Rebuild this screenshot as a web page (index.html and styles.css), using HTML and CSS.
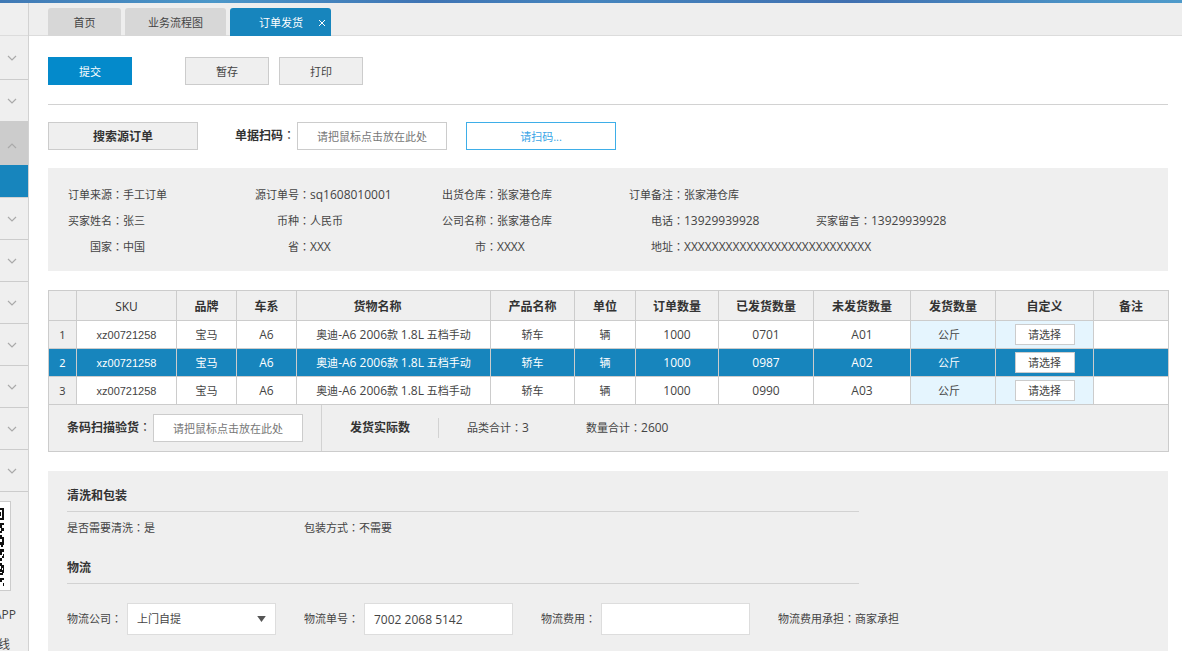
FILE: index.html
```html
<!DOCTYPE html>
<html lang="zh-CN">
<head>
<meta charset="utf-8">
<title>订单发货</title>
<link rel="stylesheet" href="styles.css">
</head>
<body>
<div class="brand-strip"></div>
<div class="shell">
  <aside class="sidebar">
    <div class="side-head"></div>
    <nav class="side-nav" aria-label="主菜单">
      <button class="side-item side-first" aria-label="展开"><svg class="chev" viewBox="0 0 10 6"><path d="M1 1l4 4 4-4"/></svg></button>
      <button class="side-item" aria-label="展开"><svg class="chev" viewBox="0 0 10 6"><path d="M1 1l4 4 4-4"/></svg></button>
      <button class="side-item side-open" aria-label="收起"><svg class="chev" viewBox="0 0 10 6"><path d="M1 5l4-4 4 4"/></svg></button>
      <a class="side-current" href="#" aria-label="当前页面"></a>
      <button class="side-item" aria-label="展开"><svg class="chev" viewBox="0 0 10 6"><path d="M1 1l4 4 4-4"/></svg></button>
      <button class="side-item" aria-label="展开"><svg class="chev" viewBox="0 0 10 6"><path d="M1 1l4 4 4-4"/></svg></button>
      <button class="side-item" aria-label="展开"><svg class="chev" viewBox="0 0 10 6"><path d="M1 1l4 4 4-4"/></svg></button>
      <button class="side-item" aria-label="展开"><svg class="chev" viewBox="0 0 10 6"><path d="M1 1l4 4 4-4"/></svg></button>
      <button class="side-item" aria-label="展开"><svg class="chev" viewBox="0 0 10 6"><path d="M1 1l4 4 4-4"/></svg></button>
      <button class="side-item" aria-label="展开"><svg class="chev" viewBox="0 0 10 6"><path d="M1 1l4 4 4-4"/></svg></button>
      <button class="side-item" aria-label="展开"><svg class="chev" viewBox="0 0 10 6"><path d="M1 1l4 4 4-4"/></svg></button>
    </nav>
    <div class="qr">
      <svg class="qr-code" viewBox="0 0 5 78" shape-rendering="crispEdges">
        <path d="M0 0h4v12H0v-2h2V2H0zM0 4h1v4H0zM0 15h4v2H2v3h2v3H2v2H0v-2h1v-3H0zM0 27h2v2h2v4H2v-2H0zM3 30h1v7H3v2H1v-2H0v-3h2zM0 41h4v3H2v3H0zM3 46h1v4H2v3H0v-3h2zM0 55h2v2h2v3H2v4H0v-3h1v-3H0zM3 60h1v5H3v2H0v-2h2zM0 70h4v2H2v2H0zM3 75h1v3H3z"/>
      </svg>
    </div>
    <div class="side-text side-app">APP</div>
    <div class="side-text side-line">线</div>
  </aside>

  <div class="workspace">
    <nav class="tabs" aria-label="页签">
      <a class="tab tab-home" href="#">首页</a>
      <a class="tab" href="#">业务流程图</a>
      <div class="tab tab-active">
        <a class="tab-link" href="#">订单发货</a>
        <button class="tab-close" aria-label="关闭"><svg viewBox="0 0 8 8"><path d="M1 1l6 6M7 1L1 7"/></svg></button>
      </div>
    </nav>

    <main class="main">
      <div class="actions">
        <button class="btn btn-primary">提交</button>
        <button class="btn">暂存</button>
        <button class="btn">打印</button>
      </div>

      <div class="scan-row">
        <button class="btn btn-wide strong">搜索源订单</button>
        <label class="scan-label strong" for="bill-scan">单据扫码<span class="colon">：</span></label>
        <input class="field" id="bill-scan" placeholder="请把鼠标点击放在此处">
        <button class="btn btn-wide btn-scan">请扫码...</button>
      </div>

      <dl class="info">
        <div class="pair"><dt>订单来源<span class="colon">：</span></dt><dd>手工订单</dd></div>
        <div class="pair"><dt>源订单号<span class="colon">：</span></dt><dd class="num">sq1608010001</dd></div>
        <div class="pair"><dt>出货仓库<span class="colon">：</span></dt><dd>张家港仓库</dd></div>
        <div class="pair pair-last"><dt>订单备注<span class="colon">：</span></dt><dd>张家港仓库</dd></div>
        <div class="pair"><dt>买家姓名<span class="colon">：</span></dt><dd>张三</dd></div>
        <div class="pair"><dt>币种<span class="colon">：</span></dt><dd>人民币</dd></div>
        <div class="pair"><dt>公司名称<span class="colon">：</span></dt><dd>张家港仓库</dd></div>
        <div class="pair"><dt>电话<span class="colon">：</span></dt><dd class="num">13929939928</dd></div>
        <div class="pair pair-end"><dt>买家留言<span class="colon">：</span></dt><dd class="num">13929939928</dd></div>
        <div class="pair"><dt>国家<span class="colon">：</span></dt><dd>中国</dd></div>
        <div class="pair"><dt>省<span class="colon">：</span></dt><dd class="num">XXX</dd></div>
        <div class="pair"><dt>市<span class="colon">：</span></dt><dd class="num">XXXX</dd></div>
        <div class="pair pair-last"><dt>地址<span class="colon">：</span></dt><dd class="num">XXXXXXXXXXXXXXXXXXXXXXXXXXX</dd></div>
      </dl>

      <section class="goods">
        <table class="grid">
          <colgroup>
            <col class="c-no"><col class="c-sku"><col class="c-brand"><col class="c-brand"><col class="c-name"><col class="c-prod"><col class="c-unit"><col class="c-order"><col class="c-sent"><col class="c-left"><col class="c-qty"><col class="c-custom"><col class="c-note">
          </colgroup>
          <thead>
            <tr><th></th><th class="latin">SKU</th><th>品牌</th><th>车系</th><th class="th-name">货物名称</th><th>产品名称</th><th>单位</th><th>订单数量</th><th>已发货数量</th><th>未发货数量</th><th>发货数量</th><th>自定义</th><th>备注</th></tr>
          </thead>
          <tbody>
            <tr><td class="no">1</td><td class="sku">xz00721258</td><td>宝马</td><td class="num">A6</td><td>奥迪<span class="num">-A6 2006</span>款 <span class="num">1.8L</span> 五档手动</td><td>轿车</td><td>辆</td><td class="num">1000</td><td class="num">0701</td><td class="num">A01</td><td class="edit qty">公斤</td><td class="edit"><select class="pick" aria-label="自定义 1"><option>请选择</option></select></td><td></td></tr>
            <tr class="selected"><td class="no">2</td><td class="sku">xz00721258</td><td>宝马</td><td class="num">A6</td><td>奥迪<span class="num">-A6 2006</span>款 <span class="num">1.8L</span> 五档手动</td><td>轿车</td><td>辆</td><td class="num">1000</td><td class="num">0987</td><td class="num">A02</td><td class="edit qty">公斤</td><td class="edit"><select class="pick" aria-label="自定义 2"><option>请选择</option></select></td><td></td></tr>
            <tr><td class="no">3</td><td class="sku">xz00721258</td><td>宝马</td><td class="num">A6</td><td>奥迪<span class="num">-A6 2006</span>款 <span class="num">1.8L</span> 五档手动</td><td>轿车</td><td>辆</td><td class="num">1000</td><td class="num">0990</td><td class="num">A03</td><td class="edit qty">公斤</td><td class="edit"><select class="pick" aria-label="自定义 3"><option>请选择</option></select></td><td></td></tr>
          </tbody>
        </table>
        <div class="summary">
          <div class="check">
            <label class="strong" for="check-scan">条码扫描验货<span class="colon">：</span></label>
            <input class="field" id="check-scan" placeholder="请把鼠标点击放在此处">
          </div>
          <div class="actual strong">发货实际数</div>
          <div class="total total-kind">品类合计<span class="colon">：</span><span class="num">3</span></div>
          <div class="total">数量合计<span class="colon">：</span><span class="num">2600</span></div>
        </div>
      </section>

      <section class="details">
        <h2 class="section-title strong">清洗和包装</h2>
        <div class="facts">
          <div>是否需要清洗<span class="colon">：</span>是</div>
          <div>包装方式<span class="colon">：</span>不需要</div>
        </div>
        <h2 class="section-title strong">物流</h2>
        <div class="logistics">
          <div class="form-item">
            <label for="carrier">物流公司<span class="colon">：</span></label>
            <div class="select-wrap">
              <select class="entry" id="carrier"><option>上门自提</option></select>
              <svg class="arrow" viewBox="0 0 10 7"><path d="M0 0h10L5 7z"/></svg>
            </div>
          </div>
          <div class="form-item">
            <label for="waybill">物流单号<span class="colon">：</span></label>
            <input class="entry num" id="waybill" value="7002 2068 5142">
          </div>
          <div class="form-item">
            <label for="fee">物流费用<span class="colon">：</span></label>
            <input class="entry num" id="fee">
          </div>
          <div>物流费用承担<span class="colon">：</span>商家承担</div>
        </div>
      </section>
    </main>
  </div>
</div>
</body>
</html>
```
FILE: styles.css
```css
* { box-sizing: border-box; }

body {
  margin: 0;
  height: 100vh;
  display: flex;
  flex-direction: column;
  overflow: hidden;
  background: #fff;
  color: #444;
  font: 11px/16px "Open Sans", "Noto Sans CJK SC", sans-serif;
}

button, input, select {
  margin: 0;
  font: inherit;
  color: inherit;
  border-radius: 0;
}
button { cursor: pointer; padding: 0; }
a { color: inherit; text-decoration: none; }

/* Full-width colon centred in its cell */
.colon { font-family: "Noto Sans CJK TC", sans-serif; font-weight: 400; font-feature-settings: "locl" 0; line-height: 1; }
.num { font-size: 12px; }
.strong { font-size: 12px; font-weight: 700; color: #333; }

.brand-strip {
  flex: none;
  height: 3px;
  background: linear-gradient(90deg, #4079b5, #4b97c9 18%, #3f74b4 36%, #4585be 50%, #4070b0 72%, #4a90c4 90%, #4e9aca);
}

.shell { flex: 1; display: flex; min-height: 0; }

/* Sidebar */
.sidebar {
  flex: none;
  width: 29px;
  overflow: hidden;
  background: #efefef;
  border-right: 1px solid #d2d2d2;
}
.side-head { height: 33px; border-bottom: 1px solid #dcdcdc; }
.side-nav { display: flex; flex-direction: column; }
.side-item {
  height: 42px;
  padding-left: 7px;
  display: flex;
  align-items: center;
  background: none;
  border: 0;
  border-bottom: 1px solid #ccc;
}
.side-first { height: 44px; }
.side-open { height: 43px; padding-top: 6px; background: #ccc; }
.side-current { height: 33px; background: #1785bd; border-bottom: 1px solid #d2d2d2; }
.chev { width: 10px; height: 6px; fill: none; stroke: #aaa; stroke-width: 1.2; }
.qr {
  width: 11px;
  height: 90px;
  margin-top: 9px;
  padding: 6px 0;
  background: #fff;
  border: 1px solid #ccc;
  border-left: 0;
}
.qr-code { display: block; width: 5px; height: 78px; fill: #111; }
.side-text { display: flex; justify-content: flex-end; font-size: 12px; }
.side-app { width: 16px; margin-top: 16px; }
.side-line { width: 10px; margin-top: 14px; }

/* Tabs */
.workspace { flex: 1; min-width: 0; display: flex; flex-direction: column; }
.tabs {
  flex: none;
  height: 33px;
  padding-left: 19px;
  display: flex;
  align-items: flex-end;
  gap: 4px;
  background: #eee;
  box-shadow: inset 0 -1px #dcdcdc;
}
.tab {
  width: 101px;
  height: 28px;
  padding-top: 2px;
  display: flex;
  align-items: center;
  justify-content: center;
  background: #d7d7d7;
  border-radius: 3px 3px 0 0;
}
.tab-home { width: 73px; }
.tab-active { background: #1785bd; color: #fff; justify-content: flex-end; gap: 15px; padding-right: 5px; }
.tab-close { width: 8px; height: 8px; background: none; border: 0; display: flex; }
.tab-close svg { width: 8px; height: 8px; stroke: #fff; stroke-width: 1; }

/* Content */
.main {
  flex: 1;
  min-height: 0;
  padding: 21px 14px 0 19px;
  display: flex;
  flex-direction: column;
}
.btn {
  width: 84px;
  height: 28px;
  padding-top: 2px;
  background: #efefef;
  border: 1px solid #ccc;
}
.btn-primary { margin-right: 43px; background: #048acb; border-color: #048acb; color: #fff; }
.btn-wide { width: 150px; }
.btn-scan { margin-left: 19px; background: #fff; border-color: #3eaee8; color: #3aa4e6; }
.actions { display: flex; gap: 10px; padding-bottom: 19px; border-bottom: 1px solid #d2d2d2; }
.scan-row { display: flex; align-items: center; margin-top: 17px; }
.scan-label { width: 62px; margin-left: 37px; white-space: nowrap; }
.field {
  width: 150px;
  height: 28px;
  padding: 0;
  text-align: center;
  background: #fff;
  border: 1px solid #ccc;
}
.field::placeholder { color: #777; opacity: 1; }

.info {
  margin: 18px 0 0;
  padding: 14px 19px 11px;
  display: grid;
  grid-template-columns: repeat(5, 187fr) 147fr;
  background: #efefef;
}
.pair { display: flex; align-items: baseline; height: 26px; padding-top: 5px; white-space: nowrap; min-width: 0; }
.pair dt { width: 56px; text-align: right; }
.pair dd { margin: 0; }
.pair-last { grid-column: 4 / -1; }
.pair-end { grid-column: 5 / -1; }

/* Goods table */
.goods { margin-top: 19px; }
.grid { width: 100%; table-layout: fixed; border-collapse: collapse; background: #fff; }
.grid th, .grid td {
  height: 28px;
  padding: 0;
  text-align: center;
  white-space: nowrap;
  border: 1px solid #ccc;
}
.grid th { height: 30px; padding-top: 2px; background: #efefef; font-size: 12px; font-weight: 700; color: #333; }
.grid .th-name { padding-right: 32px; }
.grid .latin { font-weight: 400; }
.grid .no { background: #efefef; font-family: "Noto Sans", sans-serif; }
.grid .sku { font-family: "Liberation Sans", sans-serif; }
.grid .edit { background: #e5f5fe; }
.grid .qty { padding-right: 8px; }
.grid .selected td { background: #1785bd; color: #fff; }
.c-no { width: 28px; }
.c-sku { width: 100px; }
.c-brand { width: 60px; }
.c-name { width: 194px; }
.c-prod { width: 84px; }
.c-unit { width: 61px; }
.c-order { width: 83px; }
.c-sent { width: 95px; }
.c-left { width: 97px; }
.c-qty { width: 85px; }
.c-custom { width: 98px; }
.c-note { width: 75px; }
.pick {
  appearance: none;
  display: block;
  width: 60px;
  height: 21px;
  margin: 0 auto;
  padding: 0;
  text-align-last: center;
  background: #fff;
  border: 1px solid #ccc;
  color: #444;
}
.summary {
  height: 47px;
  margin-right: -1px;
  display: flex;
  align-items: center;
  background: #efefef;
  border: 1px solid #ccc;
  border-top: 0;
}
.check {
  width: 273px;
  align-self: stretch;
  padding-left: 18px;
  display: flex;
  align-items: center;
  border-right: 1px solid #d2d2d2;
}
.check label { width: 86px; white-space: nowrap; }
.actual { padding: 2px 28px; border-right: 1px solid #d2d2d2; }
.total-kind { width: 147px; padding-left: 28px; }

/* Packing and logistics */
.details { flex: 1; margin-top: 19px; padding: 17px 19px 0; background: #efefef; }
.section-title {
  max-width: 792px;
  margin: 0;
  padding-bottom: 7px;
  border-bottom: 1px solid #d2d2d2;
  line-height: 16px;
}
.facts { display: grid; grid-template-columns: 237px 1fr; padding: 8px 0 24px; }
.logistics { display: flex; align-items: center; padding-top: 19px; gap: 28px; white-space: nowrap; }
.form-item { display: flex; align-items: center; }
.form-item label { width: 60px; }
.entry {
  width: 149px;
  height: 32px;
  padding: 0 9px;
  background: #fff;
  border: 1px solid #ddd;
}
select.entry { appearance: none; display: block; }
.select-wrap { position: relative; }
.arrow { position: absolute; right: 10px; top: 13px; width: 9px; height: 6px; fill: #555; pointer-events: none; }
```
